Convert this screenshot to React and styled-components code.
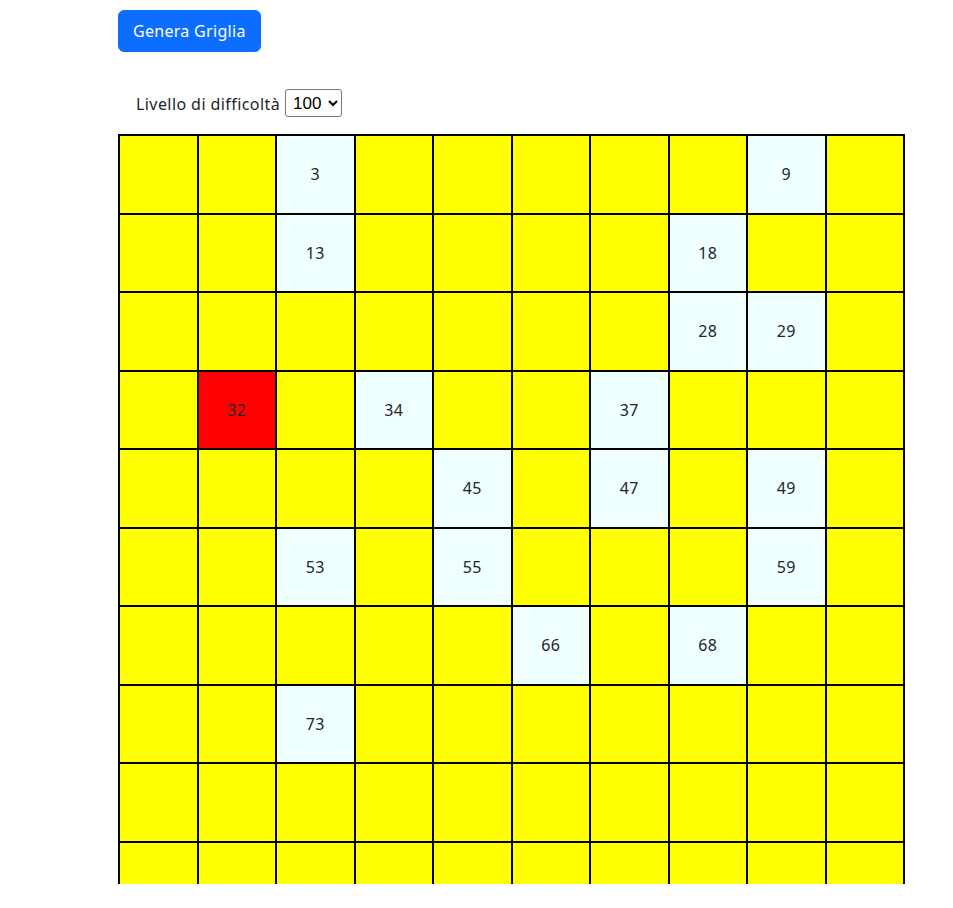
import React from "react";
import styled, { createGlobalStyle } from "styled-components";

const GlobalStyle = createGlobalStyle`
  html, body { margin: 0; padding: 0; background: #fff; }
  body {
    font-family: "Noto Sans", "Open Sans", sans-serif;
    font-size: 16px;
    line-height: 1.5;
    color: #212529;
  }
  * { box-sizing: border-box; }
`;

const Page = styled.div`
  padding: 10px 0 0 118px;
  display: flex;
  flex-direction: column;
  align-items: flex-start;
  height: 884px;
  overflow: hidden;
`;

const Button = styled.button`
  font-family: inherit;
  font-size: 16px;
  line-height: 24px;
  letter-spacing: 0.3px;
  color: #fff;
  background: #0d6efd;
  border: 1px solid #0d6efd;
  border-radius: 6px;
  padding: 8px 14px;
  cursor: pointer;
`;

const Controls = styled.div`
  display: flex;
  align-items: center;
  gap: 5px;
  margin-top: 37px;
  padding-left: 18px;
  height: 28px;
`;

const Label = styled.label`
  font-size: 16px;
  letter-spacing: 0.42px;
  padding-top: 2px;
`;

const Select = styled.select`
  font-family: "Liberation Sans", Arial, sans-serif;
  font-size: 17px;
  height: 28px;
  width: 57px;
  padding: 0 3px;
  border: 1px solid #767676;
  border-radius: 3px;
  background: #fff;
  color: #000;
`;

const Board = styled.div`
  margin-top: 17px;
  width: 787px;
  border: 1px solid #000;
  display: grid;
  grid-template-columns: repeat(10, 1fr);
  flex-shrink: 0;
`;

const colors = { hidden: "#ffff00", safe: "#f0ffff", bomb: "#ff0000" };

const Cell = styled.div`
  height: 78.5px;
  border: 1px solid #000;
  background: ${(p) => colors[p.$state]};
  display: flex;
  align-items: center;
  justify-content: center;
  font-size: 16px;
  letter-spacing: 0.3px;
  color: #212529;
`;

const safe = new Set([3, 9, 13, 18, 28, 29, 34, 37, 45, 47, 49, 53, 55, 59, 66, 68, 73]);
const bomb = 32;

export default function App() {
  const cells = Array.from({ length: 100 }, (_, i) => i + 1);
  return (
    <>
      <GlobalStyle />
      <Page>
        <Button>Genera Griglia</Button>
        <Controls>
          <Label htmlFor="lvl">Livello di difficoltà</Label>
          <Select id="lvl" defaultValue="100">
            <option value="100">100</option>
            <option value="81">81</option>
            <option value="49">49</option>
          </Select>
        </Controls>
        <Board>
          {cells.map((n) => {
            const state = n === bomb ? "bomb" : safe.has(n) ? "safe" : "hidden";
            return (
              <Cell key={n} $state={state}>
                {state !== "hidden" ? n : ""}
              </Cell>
            );
          })}
        </Board>
      </Page>
    </>
  );
}
